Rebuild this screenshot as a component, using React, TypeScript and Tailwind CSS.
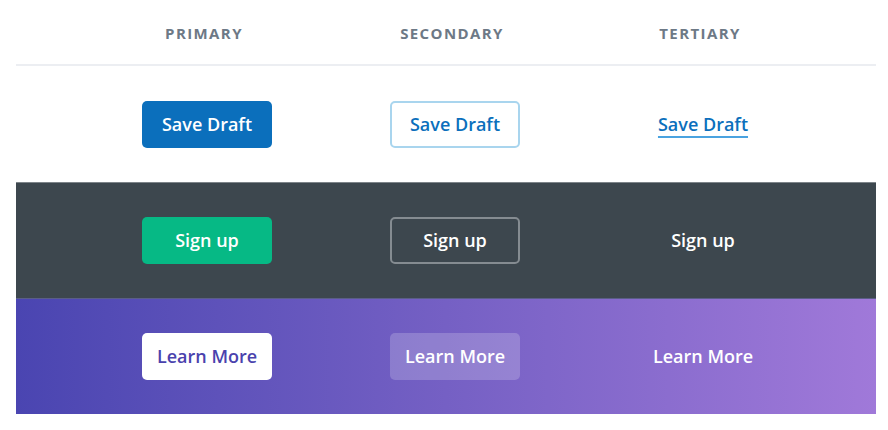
export default function App() {
    const font = { fontFamily: '"Open Sans", Lato, sans-serif' };

    return (
        <div className="w-[888px] h-[430px] bg-white" style={font}>
            <div className="w-[860px] ml-4">
                <div className="grid grid-cols-[248px_248px_248px] pl-[67px] h-[64px] items-center">
                    {['PRIMARY', 'SECONDARY', 'TERTIARY'].map((label) => (
                        <div key={label} className="text-center text-[15px] font-bold tracking-[1.4px] text-[#6d7986] pt-[2px] pr-[6px]">
                            {label}
                        </div>
                    ))}
                </div>
                <div className="h-[2px] bg-[#eceef2]" />

                <div className="grid grid-cols-[248px_248px_248px] pl-[67px] h-[116px] items-center">
                    <div className="flex justify-center">
                        <button className="w-[130px] h-[47px] rounded-[5px] bg-[#0b6fbc] text-white text-[18px] font-semibold">
                            Save Draft
                        </button>
                    </div>
                    <div className="flex justify-center">
                        <button className="w-[130px] h-[47px] rounded-[5px] border-2 border-[#a9d5ee] text-[#0b6fbc] text-[18px] font-semibold">
                            Save Draft
                        </button>
                    </div>
                    <div className="flex justify-center">
                        <button className="text-[#0b6fbc] text-[18px] font-semibold underline decoration-2 decoration-[#4aa3e0] underline-offset-[5px]">
                            Save Draft
                        </button>
                    </div>
                </div>

                <div className="grid grid-cols-[248px_248px_248px] pl-[67px] h-[116px] items-center bg-[#3d474e] border-t border-[#7d8489]">
                    <div className="flex justify-center">
                        <button className="w-[130px] h-[47px] rounded-[5px] bg-[#06b985] text-white text-[18px] font-semibold">
                            Sign up
                        </button>
                    </div>
                    <div className="flex justify-center">
                        <button className="w-[130px] h-[47px] rounded-[5px] border-2 border-[#858c91] text-white text-[18px] font-semibold">
                            Sign up
                        </button>
                    </div>
                    <div className="flex justify-center">
                        <button className="text-white text-[18px] font-semibold">Sign up</button>
                    </div>
                </div>

                <div className="grid grid-cols-[248px_248px_248px] pl-[67px] h-[116px] items-center bg-gradient-to-r from-[#4a45b1] via-[#7560c4] to-[#a079d9] border-t border-[#5a5e86]">
                    <div className="flex justify-center">
                        <button className="w-[130px] h-[47px] rounded-[5px] bg-white text-[#4a42ad] text-[18px] font-semibold">
                            Learn More
                        </button>
                    </div>
                    <div className="flex justify-center">
                        <button className="w-[130px] h-[47px] rounded-[5px] bg-white/20 text-white text-[18px] font-semibold">
                            Learn More
                        </button>
                    </div>
                    <div className="flex justify-center">
                        <button className="text-white text-[18px] font-semibold">Learn More</button>
                    </div>
                </div>
            </div>
        </div>
    );
}
